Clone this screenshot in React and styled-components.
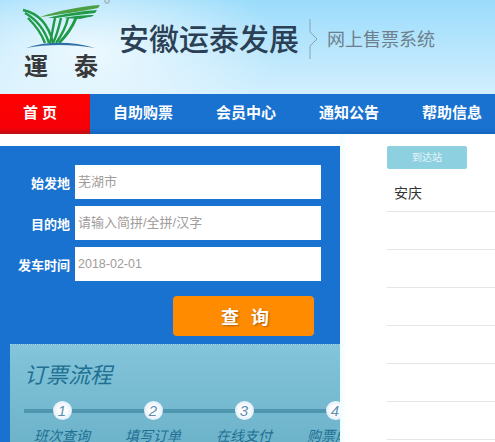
import React from 'react';
import styled, { createGlobalStyle } from 'styled-components';

const navItems = ['自助购票', '会员中心', '通知公告', '帮助信息'];

const fields = [
  { label: '始发地', value: '芜湖市', size: 13 },
  { label: '目的地', value: '请输入简拼/全拼/汉字', size: 13 },
  { label: '发车时间', value: '2018-02-01', size: 12.5 },
];

const steps = ['班次查询', '填写订单', '在线支付', '购票成功'];

const GlobalStyle = createGlobalStyle`
  html, body {
    margin: 0;
    padding: 0;
    background: #fff;
    overflow: hidden;
  }
  body {
    font-family: "Liberation Sans", "Noto Sans CJK SC", sans-serif;
  }
`;

const Page = styled.div`
  width: 495px;
  height: 442px;
  overflow: hidden;
`;

const Header = styled.header`
  height: 94px;
  display: flex;
  align-items: flex-start;
  background:
    radial-gradient(ellipse 190px 90px at 90px 50px, rgba(255, 255, 255, 0.75), rgba(255, 255, 255, 0) 100%),
    linear-gradient(#9bdcfb, #d2effe);
`;

const Brand = styled.div`
  width: 119px;
  flex-shrink: 0;
  padding-left: 22px;
  box-sizing: border-box;
`;

const BrandText = styled.div`
  display: flex;
  gap: 26px;
  margin: 3px 0 0 2px;
  font-size: 24px;
  line-height: 28px;
  font-weight: 700;
  color: #38393b;
`;

const Title = styled.h1`
  margin: 22px 0 0;
  font-size: 30px;
  line-height: 36px;
  font-weight: 500;
  color: #2b3f55;
  white-space: nowrap;
`;

const Separator = styled.svg`
  flex-shrink: 0;
  margin: 19px 0 0 10px;
`;

const Subtitle = styled.div`
  margin: 28px 0 0 8px;
  font-size: 18px;
  line-height: 24px;
  color: #6d7f8c;
  white-space: nowrap;
`;

const Nav = styled.nav`
  height: 40px;
  display: flex;
  background: linear-gradient(#1a72d0 0, #1a72d0 34px, #1365bd 100%);
`;

const HomeLink = styled.a`
  width: 90px;
  flex-shrink: 0;
  text-align: center;
  font-size: 15px;
  line-height: 37px;
  font-weight: 700;
  letter-spacing: 4px;
  text-indent: -6px;
  color: #fff;
  background: linear-gradient(#ff0000 0, #f60008 34px, #b80f12 100%);
`;

const NavLinks = styled.div`
  display: flex;
  padding-left: 1.5px;
`;

const NavLink = styled.a`
  width: 103px;
  flex-shrink: 0;
  text-align: center;
  font-size: 15px;
  line-height: 37px;
  font-weight: 700;
  color: #fff;
`;

const Content = styled.main`
  display: flex;
  align-items: flex-start;
  padding-top: 12px;
  background: linear-gradient(90deg, #fff 340px, #eefcff 340px, #fff 346px);
`;

const SearchPanel = styled.section`
  width: 340px;
  height: 296px;
  flex-shrink: 0;
  padding-top: 19px;
  box-sizing: border-box;
  overflow: hidden;
  background: #1a72d0;
`;

const SearchForm = styled.form`
  display: flex;
  flex-direction: column;
  gap: 7px;
`;

const FieldRow = styled.div`
  display: flex;
  align-items: center;
  gap: 5px;
`;

const FieldLabel = styled.label`
  width: 70px;
  text-align: right;
  font-size: 13px;
  font-weight: 700;
  color: #fff;
  white-space: nowrap;
`;

const FieldValue = styled.div`
  width: 246px;
  height: 34px;
  padding-left: 3px;
  box-sizing: border-box;
  background: #fff;
  font-size: ${(p) => p.$size}px;
  line-height: 34px;
  color: #a09c9a;
`;

const SearchButton = styled.button`
  display: block;
  width: 141px;
  height: 40px;
  margin: 15px 0 0 173px;
  padding: 0;
  border: 0;
  border-radius: 4px;
  background: #ff8c00;
  color: #fff;
  font-family: inherit;
  font-size: 18px;
  font-weight: 700;
  letter-spacing: 12px;
  text-indent: 15px;
  text-shadow: 1px 1px 2px rgba(120, 60, 0, 0.6);
`;

const ProcessPanel = styled.div`
  height: 98px;
  margin: 8px 0 0 10px;
  padding: 16px 0 0 14px;
  box-sizing: border-box;
  background: linear-gradient(#83c5da, #6db3ca);
  border-top: 1px dotted #a9d6e4;
  overflow: hidden;
`;

const ProcessTitle = styled.h2`
  margin: 0;
  font-size: 22px;
  line-height: 30px;
  font-weight: 400;
  font-style: italic;
  color: #1f6f92;
`;

const StepTrack = styled.div`
  position: relative;
  display: flex;
  margin: 10px 0 0 -7.5px;
  width: 380px;
  &::before {
    content: '';
    position: absolute;
    left: 7.5px;
    right: 0;
    top: 8px;
    height: 4px;
    background: #4f97ae;
  }
`;

const Step = styled.div`
  position: relative;
  width: 91px;
  flex-shrink: 0;
  display: flex;
  flex-direction: column;
  align-items: center;
  gap: 7px;
`;

const StepNumber = styled.span`
  width: 19px;
  height: 19px;
  border-radius: 50%;
  background: radial-gradient(circle at 50% 50%, #fff 30%, #cfe2f5 100%);
  font-size: 15px;
  line-height: 19px;
  font-style: italic;
  text-align: center;
  color: #5f8fb0;
`;

const StepName = styled.span`
  font-size: 14px;
  line-height: 18px;
  font-style: italic;
  color: #1f6f92;
  white-space: nowrap;
`;

const StationColumn = styled.aside`
  flex: 1;
  margin-left: 47px;
`;

const StationTab = styled.div`
  width: 80px;
  height: 23px;
  border-radius: 2px;
  background: #8dd0e0;
  font-size: 10px;
  line-height: 23px;
  text-align: center;
  color: #e6f6fa;
`;

const StationList = styled.ul`
  margin: 0;
  padding: 0;
  list-style: none;
`;

const StationItem = styled.li`
  height: 37px;
  padding-left: 7px;
  border-bottom: 1px solid #e6e6e6;
  font-size: 14px;
  line-height: 48px;
  color: #333;
  &:first-child {
    height: 42px;
  }
`;

const Logo = () => (
  <svg width="90" height="50" viewBox="0 0 90 50" style={{ display: 'block' }}>
    <g fill="none" stroke="#1f9a47" strokeWidth="2.4">
      <path d="M1 10 C15 13 26 22 31 43" />
      <path d="M3 13 C12 18 22 28 27 43" />
      <path d="M6 18 C12 24 19 32 23 43" />
      <path d="M33 18 C31 27 30 35 28 43" />
      <path d="M39 18 C37 27 35 35 31 43" />
      <path d="M46 18 C44 27 39 36 34 43" />
      <path d="M54 18 C50 28 43 37 37 43" strokeWidth="3" />
    </g>
    <path d="M78 5 C60 6 35 11 18 17 C35 15 60 11 76 8Z" fill="#4aa043" />
    <path d="M75 10 C60 11 40 14 26 18 L34 18 C48 16 62 14 73 13Z" fill="#1f9a47" />
    <path d="M72 15 C62 15 50 16 42 18 L58 19 C62 18 67 17 70 16.5Z" fill="#1f9a47" />
    <path d="M4 48 C24 41 50 41 73 48 C50 44 24 44 4 48Z" fill="#2f6fa8" />
    <circle cx="85" cy="1" r="2.2" fill="none" stroke="#9a8f8f" strokeWidth="0.9" />
  </svg>
);

const App = () => (
  <Page>
    <GlobalStyle />
    <Header>
      <Brand>
        <Logo />
        <BrandText>
          <span>運</span>
          <span>泰</span>
        </BrandText>
      </Brand>
      <Title>安徽运泰发展</Title>
      <Separator width="10" height="40" viewBox="0 0 10 40">
        <path d="M1 0 V13 L8 20 L1 27 V40" fill="none" stroke="#8aa3b2" strokeWidth="1" />
      </Separator>
      <Subtitle>网上售票系统</Subtitle>
    </Header>
    <Nav>
      <HomeLink>首页</HomeLink>
      <NavLinks>
        {navItems.map((item) => (
          <NavLink key={item}>{item}</NavLink>
        ))}
      </NavLinks>
    </Nav>
    <Content>
      <SearchPanel>
        <SearchForm>
          {fields.map((field) => (
            <FieldRow key={field.label}>
              <FieldLabel>{field.label}</FieldLabel>
              <FieldValue $size={field.size}>{field.value}</FieldValue>
            </FieldRow>
          ))}
        </SearchForm>
        <SearchButton type="button">查询</SearchButton>
        <ProcessPanel>
          <ProcessTitle>订票流程</ProcessTitle>
          <StepTrack>
            {steps.map((step, index) => (
              <Step key={step}>
                <StepNumber>{index + 1}</StepNumber>
                <StepName>{step}</StepName>
              </Step>
            ))}
          </StepTrack>
        </ProcessPanel>
      </SearchPanel>
      <StationColumn>
        <StationTab>到达站</StationTab>
        <StationList>
          <StationItem>安庆</StationItem>
          {[1, 2, 3, 4, 5, 6].map((row) => (
            <StationItem key={row} />
          ))}
        </StationList>
      </StationColumn>
    </Content>
  </Page>
);

export default App;
